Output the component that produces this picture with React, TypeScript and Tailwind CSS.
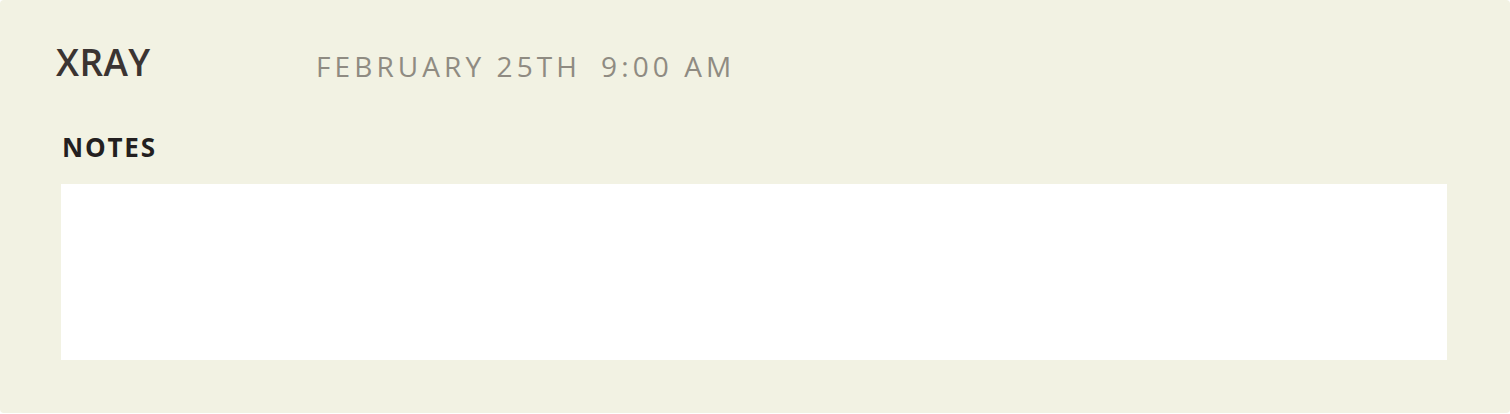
export default function App() {
  return (
    <div className="w-[1510px] h-[414px] bg-white">
      <div
        className="h-[413px] rounded-[4px] bg-[#f2f2e3] pl-[56px] pr-[63px] pt-[38px]"
        style={{ fontFamily: '"Open Sans", "Liberation Sans", sans-serif' }}
      >
        <div className="flex items-baseline">
          <h1 className="w-[260px] text-[37px] leading-[48px] font-semibold text-[#3b3432] tracking-[0.01em]">
            XRAY
          </h1>
          <div className="text-[28px] leading-[48px] text-[#8f8b82] tracking-[4.1px] translate-y-[1px]">
            <span>FEBRUARY 25TH</span>
            <span className="ml-[20px]">9:00 AM</span>
          </div>
        </div>
        <h2 className="mt-[42px] ml-[6px] text-[26px] leading-[32px] font-bold text-[#231f20] tracking-[0.07em]">
          NOTES
        </h2>
        <div className="mt-[21px] ml-[5px] h-[176px] bg-white" />
      </div>
    </div>
  );
}
